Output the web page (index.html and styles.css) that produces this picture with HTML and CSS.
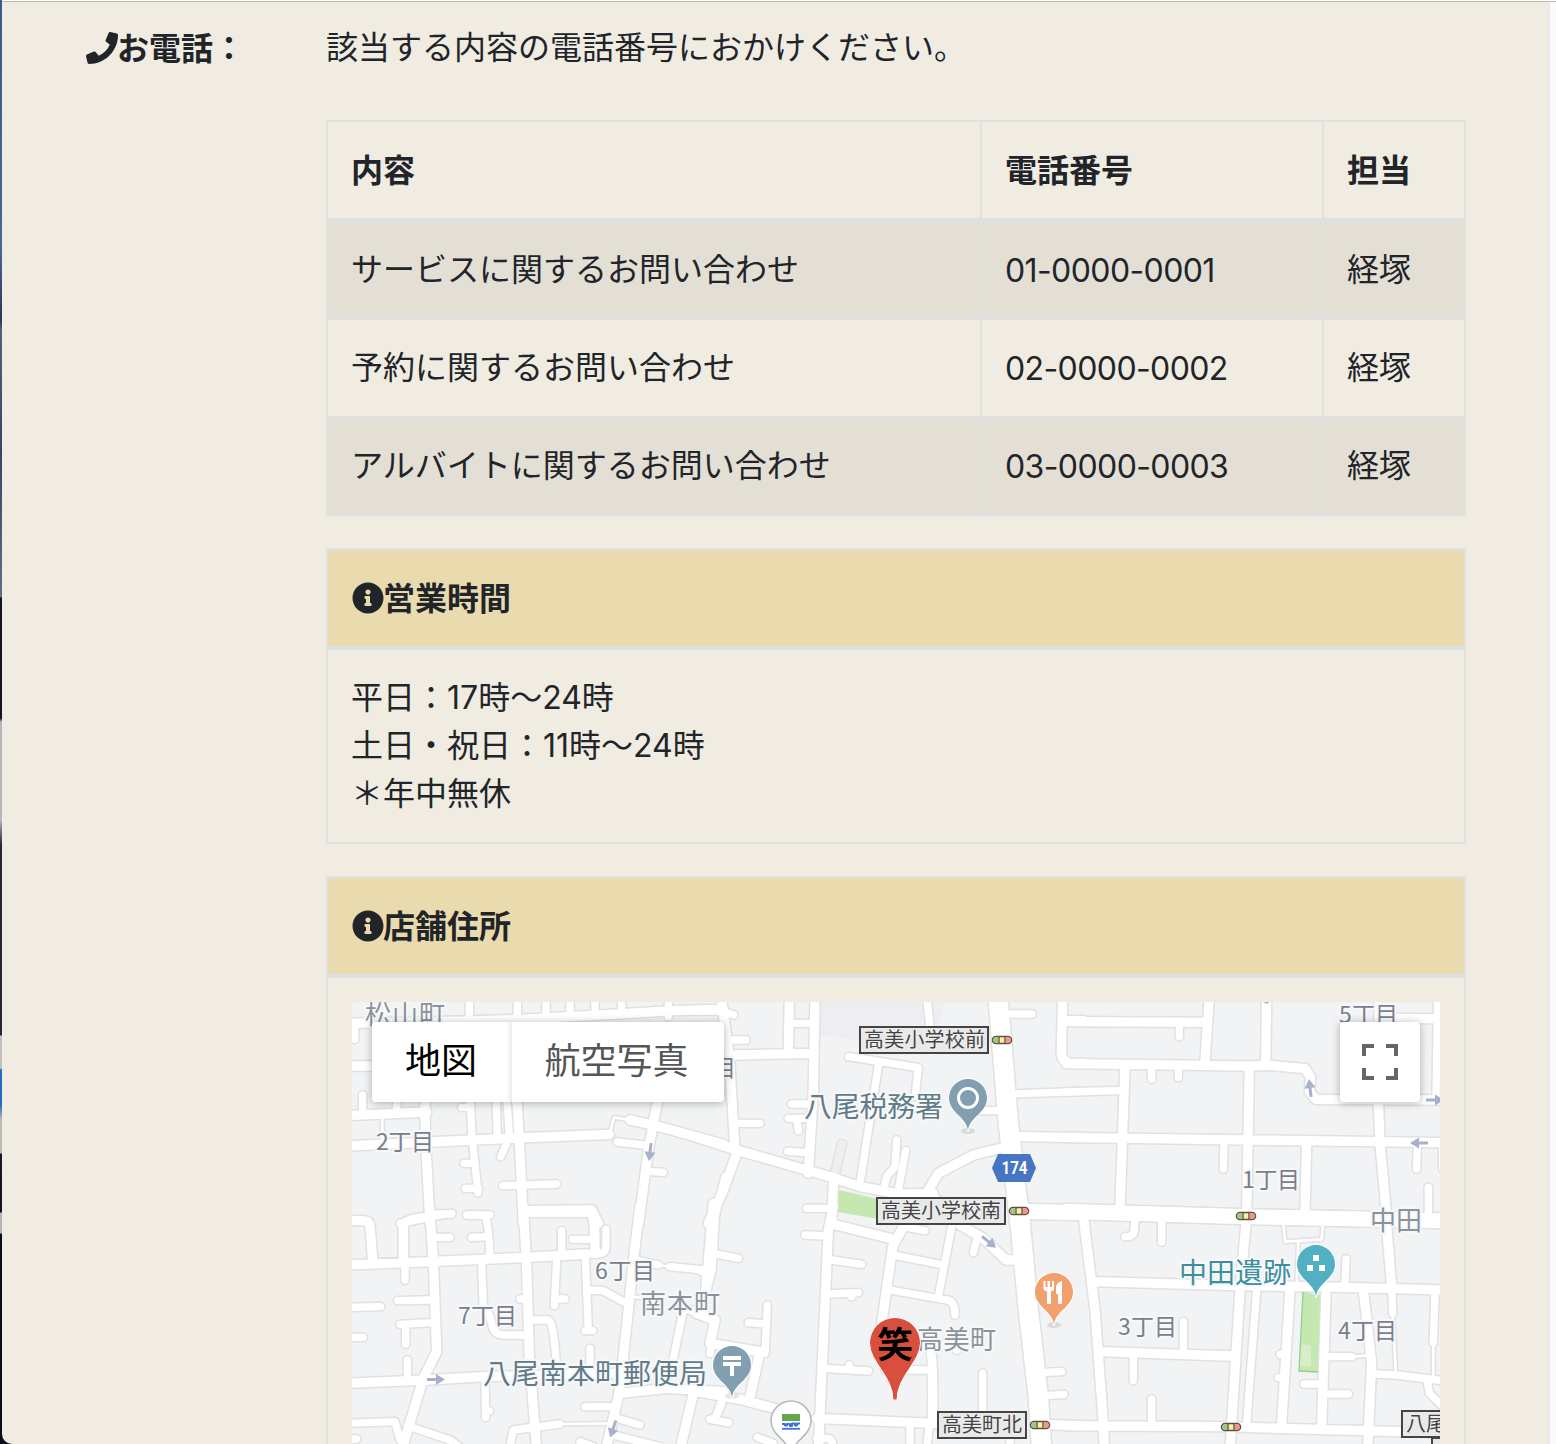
FILE: index.html
```html
<!DOCTYPE html>
<html lang="ja">
<head>
<meta charset="utf-8">
<title>お問い合わせ</title>
<link rel="stylesheet" href="styles.css">
</head>
<body>
<div class="desktop"></div>
<div class="window">
<main class="contact">
  <div class="label"><svg class="icon" viewBox="0 0 512 512"><path d="M493.4 24.6l-104-24c-11.3-2.6-22.9 3.3-27.5 13.9l-48 112c-4.2 9.8-1.4 21.3 6.9 28l60.6 49.6c-36 76.7-98.9 140.5-177.2 177.2l-49.6-60.6c-6.8-8.3-18.2-11.1-28-6.9l-112 48C3.9 366.5-2 378.1.6 389.4l24 104C27.1 504.2 36.7 512 48 512c256.1 0 464-207.5 464-464 0-11.2-7.7-20.9-18.6-23.4z"/></svg><span>お電話：</span></div>
  <div class="content">
    <p class="lead">該当する内容の電話番号におかけください。</p>
    <table class="table striped">
      <colgroup><col class="c-subject"><col class="c-phone"><col></colgroup>
      <thead><tr><th>内容</th><th>電話番号</th><th>担当</th></tr></thead>
      <tbody>
        <tr><td>サービスに関するお問い合わせ</td><td class="tel">01-0000-0001</td><td>経塚</td></tr>
        <tr><td>予約に関するお問い合わせ</td><td class="tel">02-0000-0002</td><td>経塚</td></tr>
        <tr><td>アルバイトに関するお問い合わせ</td><td class="tel">03-0000-0003</td><td>経塚</td></tr>
      </tbody>
    </table>
    <table class="table info">
      <thead><tr><th><div class="heading"><svg class="icon" viewBox="0 0 512 512"><path id="info" d="M256 8C119.043 8 8 119.083 8 256c0 136.997 111.043 248 248 248s248-111.003 248-248C504 119.083 392.957 8 256 8zm0 110c23.196 0 42 18.804 42 42s-18.804 42-42 42-42-18.804-42-42 18.804-42 42-42zm56 254c0 6.627-5.373 12-12 12h-88c-6.627 0-12-5.373-12-12v-24c0-6.627 5.373-12 12-12h12v-64h-12c-6.627 0-12-5.373-12-12v-24c0-6.627 5.373-12 12-12h64c6.627 0 12 5.373 12 12v100h12c6.627 0 12 5.373 12 12v24z"/></svg><span>営業時間</span></div></th></tr></thead>
      <tbody><tr><td>平日：17時〜24時<br>土日・祝日：11時〜24時<br>＊年中無休</td></tr></tbody>
    </table>
    <table class="table info">
      <thead><tr><th><div class="heading"><svg class="icon" viewBox="0 0 512 512"><use href="#info"/></svg><span>店舗住所</span></div></th></tr></thead>
      <tbody><tr><td class="map-cell">
        <div class="map">
          <svg class="canvas" viewBox="352 1002 1088 800" width="1088" height="800">
            <defs>
              <g id="roads">
                <g transform="translate(340 990) scale(.33333)">
                  <path class="m" d="M20 100L400 93L540 88L800 74L1000 62L1150 58M20 228H120M20 377L260 366M20 468L400 450L560 443L808 433M255 320L256 440L270 700M530 320L538 450L550 700M955 320L925 480L896 700M870 390L940 405L1150 463M560 662L755 660L775 700"/>
                  <path class="s" d="M388 20V90M532 20V90M618 20V85M690 20V80M765 20V75M845 20V70M985 20V80M44 120V148M68 315V370M170 320V360M390 320L396 440L414 608M365 352H390M372 520H400M376 595H415M468 320L472 440M500 320L508 430M500 460L482 500M488 587L650 582M832 456L920 466M935 545L970 547M1155 560L1120 700M270 680L335 670M380 675H450M180 700L265 682"/>
                  <path class="t" d="M808 433L822 382L870 390M127 380V450"/>
                </g>
                <g transform="translate(700 990) scale(.33333)">
                  <path class="xl" d="M893 10L925 400L960 700"/>
                  <path class="m" d="M-10 60L70 60M63 20L88 200L105 480M105 195L340 190M268 20L265 190M345 20L340 300L325 550M-10 442L110 480L390 560L480 590L600 612L700 610M110 490L70 600L25 700M400 580L395 700M680 610L715 550L820 495L930 468M960 440L1150 443M1088 20L1084 190Q1088 220 1115 220H1150M1090 92H1150M690 610L730 650"/>
                  <path class="s" d="M70 65L102 75M100 150H138M115 400H180M275 100H340M275 342H330M265 385H330M290 390L295 422M263 484L325 488M320 655H395M446 200L655 233L645 320M536 220L480 580M590 450L585 530L560 560L550 600M617 482L595 600M680 20L690 110M930 72H996M940 312L1150 304M830 362H920"/>
                  <path class="w" d="M975 664L1150 668"/>
                </g>
                <g transform="translate(1070 990) scale(.33333)">
                  <path class="m" d="M-10 95L400 97M-10 221L400 226L530 228L600 226L705 236L722 262L718 305L738 328L1120 330M418 20L405 215M590 20L587 215M165 230L150 650M-10 442L400 448L920 455L1120 458M538 230L530 670M710 460L705 660M925 330L930 460L952 700M980 86H1120"/>
                  <path class="s" d="M328 100V140M245 230V268M325 230V262M-10 306L160 301M462 460L460 537M1042 460L1040 537M1075 592V680M925 20V100M1103 20L1098 330M1118 460V535"/>
                  <path class="w" d="M-10 664L520 680L1120 692"/>
                </g>
                <g transform="translate(340 1210) scale(.33333)">
                  <path class="m" d="M20 32H70Q88 33 90 50L98 150M20 165L270 155L560 142L740 132M268 -10L280 150L290 425L250 505L185 720M550 -10L560 170L568 440L590 720M560 7H750Q765 10 765 120M900 -10L885 110L850 440L835 560L797 720M20 520L260 510L430 500L840 490M840 550L980 535L1150 545M1060 550L1020 720M1125 -10L1113 180L1095 250M190 150V45Q190 30 270 20"/>
                  <path class="s" d="M740 132H770Q798 130 798 110V58M285 12H335M285 82H330M388 15H430Q445 15 450 140M395 82L440 80M665 62V130M698 88H760M195 170V210M425 160L430 290Q450 310 455 340Q460 375 490 375H560M650 150L643 287M540 267H560M650 267H675M736 140L745 360M735 362H758M745 240L790 242L850 275M890 150L955 165M990 170L1110 182M20 292L122 290M173 272L270 270M180 343L275 338M197 345V402M20 382H70M202 450V510M435 510L437 622M437 603H448M20 640L165 635L180 690M210 650L330 690L370 720M508 720L520 660L660 642M735 590H830M830 625L900 645M810 672L960 710M720 695L760 710M1030 300L995 470M1035 295L1125 330L1110 430M750 415V460M580 330H625Q640 330 648 450M20 687H50M1150 560L1125 625L1110 628"/>
                  <path class="t" d="M955 165L990 170M660 642L820 640M880 260L940 268"/>
                </g>
                <g transform="translate(700 1210) scale(.33333)">
                  <path class="xl" d="M955 -20L985 300L1015 560L1025 720"/>
                  <path class="m" d="M400 -10L385 60L365 500L355 720M400 43L580 88M610 50L578 110L545 340M780 45L850 85L918 150H960M660 370L690 415Q700 430 698 640M350 625L700 640L900 645M1035 643L1150 648M40 -20L18 235M-10 310L45 330L30 400L180 425L150 560M-10 545L130 570L260 605"/>
                  <path class="s" d="M315 75L380 78M610 50L675 62M590 137L730 165M395 150L485 163M390 252L475 248M455 255V260M570 240L740 270Q765 272 765 315M755 50L715 260M830 90L820 128M375 475L505 483M448 465V475M555 480H695M770 410V420M630 640V720M687 650L680 720M848 490V610M1035 487L1085 485M1035 557L1092 553M40 130L115 145M-10 178L20 190M202 285L195 430M145 338L200 342M65 580L45 630M32 628L85 638M172 682L220 700M350 685H385Q400 690 400 720M930 680V720"/>
                  <path class="w" d="M985 5L1150 8"/>
                </g>
                <g transform="translate(1070 1210) scale(.33333)">
                  <path class="w" d="M-10 4L520 20L1120 32"/>
                  <path class="m" d="M40 20L75 300L100 640L103 720M70 215L500 227L740 230L1120 240M528 40L510 240L480 720M950 50L965 230M660 240L635 640M768 250L755 645M880 240L905 460L893 720M90 425L480 438M-10 647L460 650L740 658L1120 668"/>
                  <path class="s" d="M195 30L192 65Q190 80 165 80M275 40V96M560 240L530 640M828 147L825 220M965 230L968 310M630 433H650M625 503H645M780 440H845M702 522H750M770 552H835M920 492L980 495L1120 512M1095 250L1090 398M1073 520L1078 550L1120 590M340 335V420M190 440V512M245 567V640"/>
                  <path class="t" d="M640 40L645 95L755 88L758 50M685 95L680 220M968 300L977 480M850 440L890 436M1090 395V500"/>
                </g>
              </g>
              <path id="pin" d="M0 33C-1 19-19 15-19 0A19 19 0 0 1 19 0C19 15 1 19 0 33Z"/>
              <g id="signal"><rect x="-9.5" y="-3.5" width="19" height="7" rx="3.5" fill="#f5f3a0" stroke="#6a4d40" stroke-width="1.6"/><path d="M-6-2.7H-3.500V2.700H-6A2.700 2.700 0 0 1-6-2.700" fill="#94cb91"/><path d="M6-2.700H3.500V2.700H6A2.700 2.700 0 0 0 6-2.700" fill="#f19494"/><path d="M-3-3V3M3-3V3" stroke="#6a4d40" stroke-width="1.300"/></g>
              <path id="arrow" d="M-9-1.500H0V-5.500L9 0L0 5.500V1.500H-9Z" fill="#a9b0cb"/>
            </defs>
            <rect x="352" y="1002" width="1088" height="800" fill="#f1f3f4"/>
            <path d="M821 1002H944L938 1029L858 1040L821 1035Z" fill="#eeedf2"/>
            <use href="#roads" class="casing"/>
            <path d="M842 1144L835 1174" fill="none" stroke="#e1e1e1" stroke-width="11" stroke-linecap="round"/>
            <path d="M842 1144L835 1174" fill="none" stroke="#efefef" stroke-width="8" stroke-linecap="round"/>
            <use href="#roads" class="surface"/>
            <path d="M839 1190L878 1199V1219L838 1212Z" fill="#c5e8b0"/>
            <path d="M1303 1292L1320 1295L1318 1372L1299 1371Z" fill="#c5e8b0"/>
            <path d="M1303 1292L1299 1371L1318 1372" fill="none" stroke="#91cf91" stroke-width="1.300"/>
            <path d="M1302 1344L1311 1345V1367L1300 1366Z" fill="#d7edca"/>

            <use href="#arrow" transform="translate(650 1152) rotate(97)"/>
            <use href="#arrow" transform="translate(436 1379.500)"/>
            <use href="#arrow" transform="translate(613 1429) rotate(108)"/>
            <use href="#arrow" transform="translate(989 1242) rotate(39)"/>
            <use href="#arrow" transform="translate(1310 1088) rotate(-97)"/>
            <use href="#arrow" transform="translate(1435 1100)"/>
            <use href="#arrow" transform="translate(1419 1143) rotate(180)"/>
            <path d="M1263.500 1002H1269.500L1266.500 1004Z" fill="#a9b0cb"/>
            <use href="#signal" x="1002" y="1040"/><use href="#signal" x="1019" y="1211"/><use href="#signal" x="1246" y="1216"/><use href="#signal" x="1040" y="1425"/><use href="#signal" x="1231" y="1427"/>

            <g class="town">
              <text x="365" y="1024" textLength="80">松山町</text>
              <text x="640" y="1313" textLength="80">南本町</text>
              <text x="917" y="1349" textLength="79">高美町</text>
              <text x="1370" y="1230" textLength="52">中田</text>
            </g>
            <g class="block">
              <text x="376" y="1150" textLength="58">2丁目</text>
              <text x="678" y="1076" textLength="58">5丁目</text>
              <text x="1339" y="1023" textLength="59">5丁目</text>
              <text x="1242" y="1188" textLength="58">1丁目</text>
              <text x="595" y="1279" textLength="60">6丁目</text>
              <text x="458" y="1324" textLength="59">7丁目</text>
              <text x="1118" y="1335" textLength="59">3丁目</text>
              <text x="1338" y="1339" textLength="59">4丁目</text>
            </g>
            <g class="poi">
              <text x="804" y="1117" textLength="139">八尾税務署</text>
              <text x="483" y="1384" textLength="224">八尾南本町郵便局</text>
              <text class="teal" x="1179" y="1283" textLength="112">中田遺跡</text>
            </g>
            <g class="crossing">
              <rect x="860" y="1027" width="128" height="26"/><text x="864" y="1047" textLength="121">高美小学校前</text>
              <rect x="877" y="1198" width="128" height="26"/><text x="881" y="1218" textLength="120">高美小学校南</text>
              <rect x="938" y="1412" width="88" height="26"/><text x="942" y="1432" textLength="80">高美町北</text>
              <rect x="1402" y="1411" width="60" height="26"/><text x="1406" y="1431" textLength="40">八尾</text>
              <rect x="1432" y="1438" width="60" height="26"/>
            </g>
            <path d="M998 1154H1030L1036 1168L1030 1182H998L992 1168Z" fill="#4676c1"/>
            <text class="route" x="1014.500" y="1174" textLength="26" lengthAdjust="spacingAndGlyphs">174</text>

            <g fill="#000" opacity=".1"><ellipse cx="968" cy="1131" rx="7" ry="3"/><ellipse cx="732" cy="1396" rx="7" ry="3"/><ellipse cx="1054" cy="1325" rx="7" ry="3"/></g>
            <g class="pin" transform="translate(968 1098)" fill="#829fb1"><use href="#pin"/><circle r="9.500" fill="none" stroke="#fff" stroke-width="3"/></g>
            <g class="pin" transform="translate(732 1365)" fill="#829fb1"><use href="#pin"/><path d="M-9-9H9V-5H-9ZM-9-3H9V1H2V11H-2V1H-9Z" fill="#fff"/></g>
            <g class="pin" transform="translate(1054 1292)" fill="#f1a06e"><use href="#pin"/><path d="M-10.500-11H-8.500V-5H-6.500V-11H-4V-5H-2V-11H0V-4Q0-1-3-.5V12H-7V-.5Q-10.500-1-10.500-4ZM8-11V12H4V2H2V-5Q3-10 8-11Z" fill="#fff"/></g>
            <g class="pin" transform="translate(1316 1264)" fill="#52b0c3"><use href="#pin"/><path d="M-3-9H3V-3H-3ZM-9 1H-3V7H-9ZM3 1H9V7H3Z" fill="#fff"/></g>
            <path d="M791 1455C790 1441 771 1436 771 1421A20 20 0 0 1 811 1421C811 1436 792 1441 791 1455Z" fill="#fff" stroke="#b4b9be" stroke-width="1.500"/>
            <path d="M782 1414H800V1421H782Z" fill="#68a64d"/><path d="M782 1428.800H800" stroke="#3d72d8" stroke-width="1.800"/><path d="M782 1424H785V1425.500H787V1424H790V1426H792V1423.500H795V1425.500H797V1423.500H800" fill="none" stroke="#3d72d8" stroke-width="2"/>
            <path d="M893 1400C893 1376 869.500 1362 869.500 1343A25.500 25.500 0 0 1 920.500 1343C920.500 1362 897 1376 897 1400Z" fill="#d94f3d" stroke="#fff" stroke-width="1"/>
            <text class="marker" x="895" y="1358">笑</text>
          </svg>
          <div class="map-type"><span class="active">地図</span><span>航空写真</span></div>
          <div class="fullscreen"><svg viewBox="0 0 36 36" width="36" height="36"><path d="M0 0H12V4H4V12H0ZM24 0H36V12H32V4H24ZM0 24H4V32H12V36H0ZM32 24H36V36H24V32H32Z"/></svg></div>
        </div>
      </td></tr></tbody>
    </table>
  </div>
</main>
<aside class="scrollbar"></aside>
</div>
</body>
</html>
```
FILE: styles.css
```css
* { box-sizing: border-box; }
body {
  margin: 0;
  height: 1444px;
  overflow: hidden;
  display: flex;
  background: #101421;
  color: #212529;
  font: 400 32px/48px Inter, "Noto Sans CJK JP", sans-serif;
}
.desktop {
  width: 2px;
  background: linear-gradient(#3e588e 0, #4c649b 250px, #2c3553 320px, #52617f 330px, #394567 450px, #626c8a 597px, #111522 598px, #111522 718px, #b5b5ba 722px, #b5b5ba 820px, #292533 845px, #292533 1035px, #c0c0c3 1036px, #c0c0c3 1068px, #286cbd 1070px, #286cbd 1105px, #bbb 1120px, #bbb 1153px, #171728 1154px, #101421 1212px, #b5b5b8 1213px, #b5b5b8 1233px, #070d1a 1234px);
}
.window {
  flex: 1;
  height: 1444px;
  display: flex;
  overflow: hidden;
  border-top: 1px solid #fff;
  border-bottom-left-radius: 10px;
  background: #f0ece1;
}
.contact {
  flex: 1;
  display: flex;
  padding: 22px 82px 0 84px;
  border-top: 1px solid #b5b8b6;
}
.label { display: flex; align-items: center; flex: 0 0 240px; height: 48px; font-weight: 700; }
.icon { width: 32px; height: 32px; flex: none; fill: currentColor; }
.label span, .heading span { margin: 1px 0 0 -1px; }
.content { flex: 0 0 1140px; }
.lead { margin: 0 0 48px; }
.table {
  width: 1140px;
  margin: 0 0 32px;
  table-layout: fixed;
  border-collapse: collapse;
}
.table th, .table td { padding: 24px 24px 24px 23px; border: 2px solid #dde1e4; text-align: left; vertical-align: top; height: 98px; }
.table th { padding-top: 25px; padding-bottom: 23px; border-bottom-width: 4px; font-weight: 700; }
.c-subject { width: 654px; }
.c-phone { width: 342px; }
.table .tel { padding-top: 25px; padding-bottom: 23px; letter-spacing: -.6px; }
.striped tbody tr:nth-child(odd) { background: #e4dfd5; }
.table.info th, .table .map-cell { padding: 24px; }
.info th { background: #e9dbad; }
.heading { display: flex; align-items: center; height: 48px; }
.scrollbar { width: 8px; background: #fafafa; border-left: 2px solid #e8e8e8; border-top: 1px solid #b5b8b6; }

.map { position: relative; height: 800px; overflow: hidden; }
.canvas { display: block; font-family: "Noto Sans CJK JP", sans-serif; }
.canvas path { stroke-linejoin: round; }
#roads path { fill: none; stroke-linecap: round; stroke-width: calc(var(--width) + var(--edge)); }
#roads .xl { --width: 58px; }
#roads .w { --width: 44px; }
#roads .m { --width: 28px; }
#roads .s { --width: 22px; }
#roads .t { --width: 8px; }
.casing { --edge: 9px; stroke: #e1e1e1; }
.surface { --edge: 0px; stroke: #fff; }
.canvas text { paint-order: stroke; stroke: #f7f8f9; stroke-width: 4px; stroke-linejoin: round; }
.town { font-size: 26px; font-weight: 400; fill: #8a9399; }
.block { font-size: 23px; font-weight: 400; fill: #7b7e8c; }
.poi { font-size: 28px; font-weight: 400; fill: #627b89; }
.poi .teal { fill: #3c8f9e; }
.crossing { font-size: 20px; font-weight: 400; fill: #444; }
.crossing rect { fill: #e9e9e9; stroke: #444; stroke-width: 2px; }
.canvas .crossing text { stroke: #eee; stroke-width: 2px; }
.canvas .route { font: 700 18px Roboto, sans-serif; fill: #fff; stroke: none; text-anchor: middle; }
.canvas .marker { font-size: 36px; font-weight: 700; fill: #000; stroke: none; text-anchor: middle; }
.pin > use { stroke: #fff; stroke-width: 2px; paint-order: stroke; }

.map-type {
  position: absolute;
  left: 20px;
  top: 20px;
  display: flex;
  height: 80px;
  border-radius: 4px;
  background: #fff;
  box-shadow: 0 1px 8px rgba(0, 0, 0, .3);
  font: 400 36px/73px "Noto Sans CJK JP", sans-serif;
  color: #565656;
}
.map-type span { width: 212px; padding-right: 3px; text-align: center; }
.map-type .active { width: 140px; padding-right: 2px; color: #000; background: linear-gradient(to left, #ececec, #fff 6px); border-radius: 4px 0 0 4px; }
.fullscreen {
  position: absolute;
  right: 20px;
  top: 20px;
  width: 80px;
  height: 80px;
  display: grid;
  place-items: center;
  border-radius: 4px;
  background: #fff;
  box-shadow: 0 1px 8px rgba(0, 0, 0, .3);
}
.fullscreen svg { fill: #666; }
```
